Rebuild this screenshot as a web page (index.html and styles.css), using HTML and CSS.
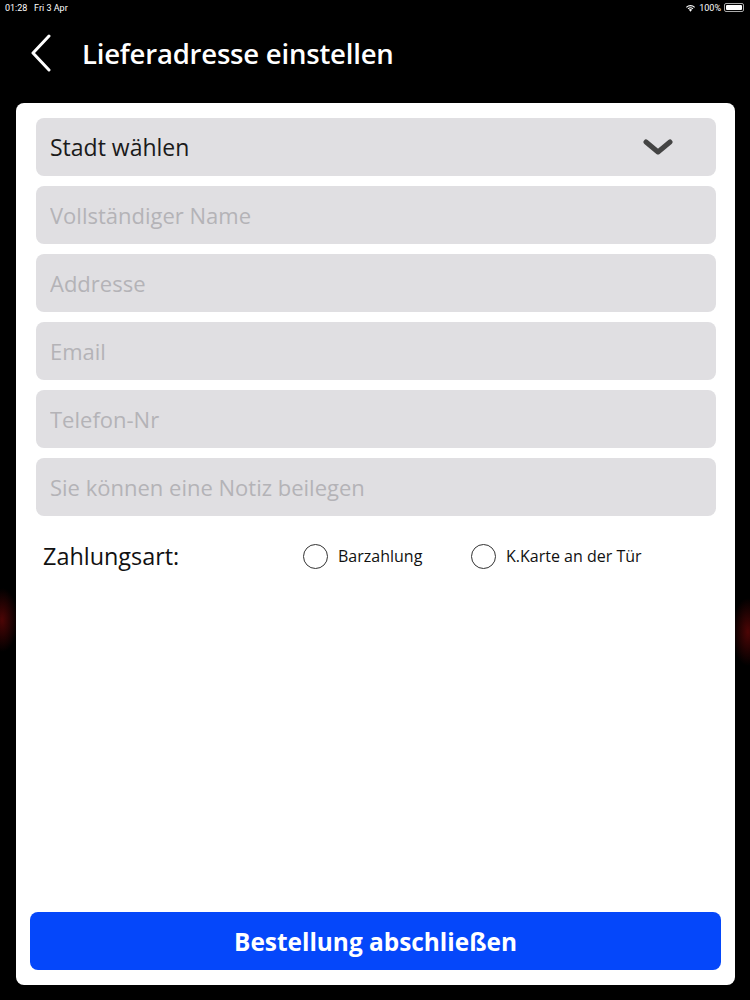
FILE: index.html
```html
<!DOCTYPE html>
<html lang="de">
<head>
  <meta charset="UTF-8" />
  <meta name="viewport" content="width=device-width, initial-scale=1.0" />
  <title>Lieferadresse einstellen</title>
  <link rel="stylesheet" href="styles.css">
</head>
<body>
  <div class="status-bar">
    <span class="status-left">01:28&nbsp;&nbsp;&nbsp;Fri 3 Apr</span>
    <span class="status-right">
      <svg class="wifi" viewBox="0 0 16 12" width="11" height="8">
        <path d="M8 11.5 L5.6 8.8 A3.4 3.4 0 0 1 10.4 8.8 Z" fill="#fff"/>
        <path d="M3.7 6.9 A6.2 6.2 0 0 1 12.3 6.9 L11.2 8 A4.7 4.7 0 0 0 4.8 8 Z" fill="#fff"/>
        <path d="M1.2 4.4 A9.8 9.8 0 0 1 14.8 4.4 L13.6 5.6 A8.1 8.1 0 0 0 2.4 5.6 Z" fill="#fff"/>
      </svg>
      100%
      <span class="battery"><span class="battery-level"></span></span>
    </span>
  </div>

  <header class="top-bar">
    <button class="back-btn" aria-label="Zurück">
      <svg viewBox="0 0 22 38" width="22" height="38">
        <path d="M19 2 L3 19 L19 36" fill="none" stroke="#fff" stroke-width="3" stroke-linecap="round" stroke-linejoin="round"/>
      </svg>
    </button>
    <h1>Lieferadresse einstellen</h1>
  </header>

  <main class="card">
    <div class="fields">
      <div class="field select">
        <span>Stadt wählen</span>
        <svg class="chevron" viewBox="0 0 30 16" width="30" height="16">
          <path d="M3 3 L15 13 L27 3" fill="none" stroke="#444" stroke-width="5" stroke-linecap="round" stroke-linejoin="round"/>
        </svg>
      </div>
      <input class="field" type="text" placeholder="Vollständiger Name">
      <input class="field" type="text" placeholder="Addresse">
      <input class="field" type="email" placeholder="Email">
      <input class="field" type="tel" placeholder="Telefon-Nr">
      <input class="field" type="text" placeholder="Sie können eine Notiz beilegen">
    </div>

    <div class="payment">
      <span class="payment-label">Zahlungsart:</span>
      <label class="option option-cash"><span class="radio"></span>Barzahlung</label>
      <label class="option"><span class="radio"></span>K.Karte an der Tür</label>
    </div>

    <button class="submit">Bestellung abschließen</button>
  </main>
</body>
</html>
```

FILE: styles.css
```css
* {
  box-sizing: border-box;
}

body {
  margin: 0;
  height: 1000px;
  overflow: hidden;
  background:
    radial-gradient(ellipse 16px 32px at 2px 620px, rgba(140,10,10,0.55), transparent),
    radial-gradient(ellipse 16px 34px at 748px 632px, rgba(140,10,10,0.55), transparent),
    #000;
  font-family: "Open Sans", "Noto Sans", sans-serif;
  color: #111;
  display: flex;
  flex-direction: column;
}

.status-bar {
  height: 15px;
  display: flex;
  justify-content: space-between;
  align-items: center;
  padding: 0 6px 0 5px;
  color: #fff;
  font-size: 9px;
  font-family: "Roboto", sans-serif;
}

.status-right {
  display: flex;
  align-items: center;
  gap: 3px;
}

.battery {
  width: 20px;
  height: 9px;
  border: 1px solid #aaa;
  border-radius: 2px;
  padding: 1px;
  display: flex;
}

.battery-level {
  flex: 1;
  background: #fff;
  border-radius: 1px;
}

.top-bar {
  height: 74px;
  display: flex;
  align-items: center;
  padding-left: 30px;
  padding-top: 2px;
}

.back-btn {
  background: none;
  border: none;
  padding: 0;
  width: 52px;
  display: flex;
}

.top-bar h1 {
  margin: 0;
  color: #fff;
  font-size: 27.5px;
  font-weight: 600;
  letter-spacing: -0.2px;
}

.card {
  margin: 14px 15px 15px 16px;
  flex: 1;
  background: #fff;
  border-radius: 8px;
  padding: 15px 19px 15px 20px;
  display: flex;
  flex-direction: column;
}

.fields {
  display: flex;
  flex-direction: column;
  gap: 10px;
}

.field {
  height: 58px;
  width: 100%;
  border: none;
  border-radius: 8px;
  background: #e0dfe2;
  padding: 0 14px;
  font-family: inherit;
  font-size: 22px;
  color: #111;
  outline: none;
}

.field::placeholder {
  color: #b4b3b7;
}

.select {
  display: flex;
  align-items: center;
  justify-content: space-between;
  padding-right: 43px;
  font-size: 23px;
  font-weight: 500;
  color: #1a1a1a;
}

.payment {
  display: flex;
  align-items: center;
  height: 80px;
  padding-left: 7px;
}

.payment-label {
  font-size: 23.4px;
  font-weight: 500;
  width: 260px;
}

.option {
  display: flex;
  align-items: center;
  gap: 10px;
  font-size: 16px;
  font-weight: 500;
}

.option-cash {
  width: 168px;
}

.radio {
  width: 25px;
  height: 25px;
  border: 1.5px solid #333;
  border-radius: 50%;
}

.submit {
  margin-top: auto;
  margin-left: -6px;
  margin-right: -5px;
  height: 58px;
  border: none;
  border-radius: 8px;
  background: #0547fa;
  color: #fff;
  font-family: inherit;
  font-size: 24.4px;
  font-weight: 700;
}
```
